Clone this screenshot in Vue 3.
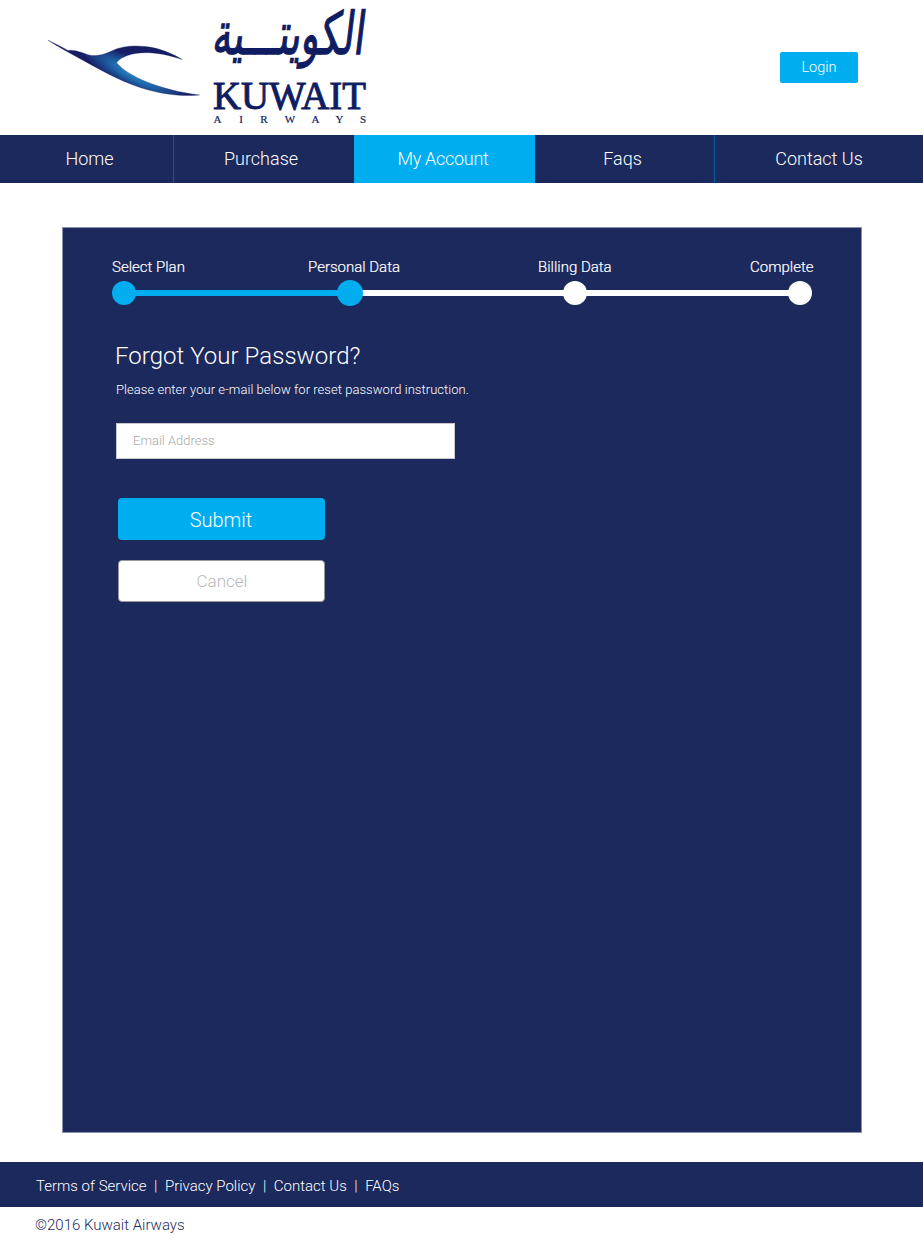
<script setup>
import { ref } from 'vue'

const email = ref('')
const nav = [
  { label: 'Home', key: 'home' },
  { label: 'Purchase', key: 'purchase' },
  { label: 'My Account', key: 'account', active: true },
  { label: 'Faqs', key: 'faqs' },
  { label: 'Contact Us', key: 'contact' },
]
const steps = ['Select Plan', 'Personal Data', 'Billing Data', 'Complete']
const links = ['Terms of Service', 'Privacy Policy', 'Contact Us', 'FAQs']
</script>

<template>
  <div class="page">
    <header class="header">
      <svg class="logo" width="330" height="130" viewBox="40 0 330 130" role="img" aria-label="Kuwait Airways">
        <defs>
          <radialGradient id="wing" gradientUnits="userSpaceOnUse" cx="0" cy="0" r="1" gradientTransform="translate(134 74) rotate(27) scale(60 15)">
            <stop offset="0" stop-color="#2b8acb" />
            <stop offset="0.35" stop-color="#1f6bb0" />
            <stop offset="1" stop-color="#171d63" />
          </radialGradient>
        </defs>
        <path fill="url(#wing)" stroke="#171d63" stroke-width=".3" d="M48 40.200C56 44 62 47 68 50.400C76 49.500 82 53 88 54.700C96 57 103 54.600 111 51.200C122 45.800 134 45.200 146 46.600C160 48.200 172 53.500 182.400 59.600C169 55.200 158 52.700 145 52.700C132 52.900 121 56.500 116.500 62.700C128 76.500 160 90 199.500 95C180 96.900 159 93.700 140 87.500C118 80 96 67.500 76 56.400C66 51 57 46 48 40.200Z" />
        <text class="arabic" transform="translate(287.500 54) skewX(-7) scale(1 1.4)" x="0" y="0" text-anchor="middle" textLength="152" lengthAdjust="spacingAndGlyphs" direction="rtl">الكويتـــية</text>
        <text class="kuwait" x="213" y="108.500" textLength="153" lengthAdjust="spacingAndGlyphs">KUWAIT</text>
        <g class="airways">
          <text x="217.500" y="123">A</text>
          <text x="241" y="123">I</text>
          <text x="264" y="123">R</text>
          <text x="290" y="123">W</text>
          <text x="315.500" y="123">A</text>
          <text x="339.500" y="123">Y</text>
          <text x="363" y="123">S</text>
        </g>
      </svg>
      <button class="login">Login</button>
    </header>

    <nav class="nav">
      <a v-for="n in nav" :key="n.key" :class="['tab', n.key, { active: n.active }]"><span>{{ n.label }}</span></a>
    </nav>

    <main class="panel">
      <div class="labels">
        <span v-for="s in steps" :key="s">{{ s }}</span>
      </div>
      <div class="track">
        <i class="dot done"></i><i class="line done"></i>
        <i class="dot done current"></i><i class="line"></i>
        <i class="dot"></i><i class="line"></i>
        <i class="dot"></i>
      </div>
      <form class="form" @submit.prevent>
        <h1>Forgot Your Password?</h1>
        <p>Please enter your e-mail below for reset password instruction.</p>
        <input v-model="email" type="text" placeholder="Email Address" />
        <button class="btn submit">Submit</button>
        <button class="btn cancel" type="button">Cancel</button>
      </form>
    </main>

    <footer>
      <div class="links">
        <template v-for="(l, i) in links" :key="l">
          <span v-if="i" class="sep">|</span><a>{{ l }}</a>
        </template>
      </div>
      <div class="copy">©2016 Kuwait Airways</div>
    </footer>
  </div>
</template>

<style>
body { background: #fff; }
</style>

<style scoped>
* { box-sizing: border-box; }
.page {
  width: 923px;
  height: 1244px;
  overflow: hidden;
  background: #fff;
  font-family: Roboto, "Liberation Sans", sans-serif;
  font-weight: 300;
  color: #fff;
}
button, input { font-family: inherit; font-weight: 300; margin: 0; }
.header {
  height: 135px;
  display: flex;
  justify-content: space-between;
  align-items: flex-start;
  padding: 0 65px 0 40px;
}
.logo { display: block; overflow: visible; fill: #101c61; }
.arabic { font: 42px "DejaVu Sans", sans-serif; stroke: #101c61; stroke-width: .9px; }
.kuwait { font: 40.500px "Liberation Serif", serif; stroke: #101c61; stroke-width: 1px; }
.airways { font: 11px "Liberation Serif", serif; text-anchor: middle; stroke: #101c61; stroke-width: .2px; }
.login {
  width: 78px;
  height: 31px;
  margin-top: 52px;
  padding: 0;
  border: 0;
  border-radius: 2px;
  background: #00aef0;
  color: #fff;
  font-size: 14.500px;
}
.nav {
  display: grid;
  grid-template-columns: 174px 180px 181px 180px 208px;
  height: 48px;
  background: #1c295d;
}
.tab {
  display: flex;
  align-items: center;
  justify-content: center;
  padding-bottom: 2px;
  font-size: 18px;
}
.home { border-right: 1px solid #075a9c; padding-left: 6px; }
.purchase { padding-right: 6px; }
.account { padding-right: 3px; letter-spacing: -.28px; }
.faqs { border-right: 1px solid #075a9c; padding-right: 4px; }
.active { background: #00aef0; }
.panel {
  width: 800px;
  height: 906px;
  margin: 44px 0 0 62px;
  padding: 30px 49px 0;
  border: 1px solid #8b91ad;
  background: #1c295d;
}
.labels {
  display: grid;
  grid-template-columns: 196px 230px 212px auto;
  height: 22px;
  line-height: 18px;
  font-size: 15px;
  -webkit-text-stroke: .2px #fff;
  white-space: nowrap;
}
.track { display: flex; align-items: center; width: 700px; height: 26px; }
.dot { width: 24px; height: 24px; border-radius: 50%; background: #fff; }
.dot.current { width: 26px; height: 26px; }
.line { flex: 1; height: 6px; margin: 0 -1px; background: #fff; }
.dot.done, .line.done { background: #00aef0; }
.dot.current { position: relative; }
.form { display: flex; flex-direction: column; align-items: flex-start; padding-left: 4px; }
h1 { margin: 34px 0 0 -1px; font-size: 24px; line-height: 32px; font-weight: 300; letter-spacing: .04px; }
p { margin: 9px 0 0; font-size: 13px; line-height: 18px; letter-spacing: .045px; }
input {
  width: 339px;
  height: 36px;
  margin-top: 24px;
  padding: 0 16px 2px;
  border: 1px solid #c8c8c8;
  border-radius: 0;
  background: #fff;
  font-size: 13px;
}
input::placeholder { color: #aaa; opacity: 1; }
.btn {
  width: 207px;
  height: 42px;
  margin-left: 2px;
  padding: 0;
  border: 0;
  border-radius: 4px;
}
.submit { margin-top: 39px; background: #00aef0; color: #fff; font-size: 20px; padding: 2px 1px 0 0; }
.cancel { margin-top: 20px; background: #fff; color: #b8b8b8; border: 1px solid #999; font-size: 17px; padding-left: 1px; }
.links {
  display: flex;
  align-items: center;
  height: 45px;
  margin-top: 29px;
  padding: 3px 36px 0;
  background: #1c295d;
  font-size: 15px;
}
.sep { width: 18.400px; text-align: center; }
.copy { padding: 9px 35px; color: #1c295d; font-size: 15px; line-height: 18px; }
</style>
